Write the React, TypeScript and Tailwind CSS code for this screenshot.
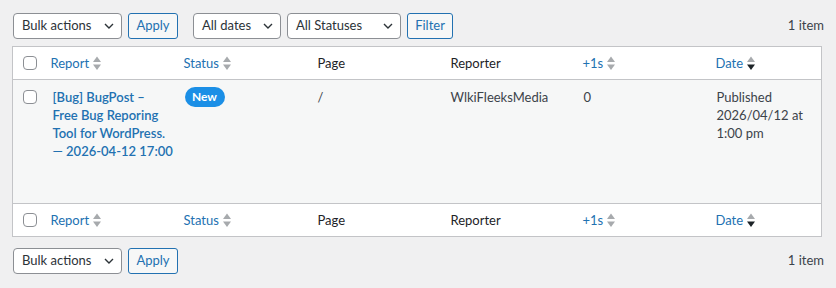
import React from 'react'

const font = { fontFamily: 'Lato, "Noto Sans", sans-serif' }

const Chevron = () => (
  <svg width="10" height="6" viewBox="0 0 10 6" className="shrink-0">
    <path d="M1 1l4 4 4-4" fill="none" stroke="#2c3338" strokeWidth="1.4" />
  </svg>
)

const SortIcon = ({ active = false }: { active?: boolean }) => (
  <svg width="8" height="15" viewBox="0 0 8 15" className="ml-1 inline-block shrink-0">
    <path d="M4 0.5L8 6H0z" fill="#a7aaad" />
    <path d="M0 8.5h8L4 14z" fill={active ? '#1d2327' : '#a7aaad'} />
  </svg>
)

const Select = ({ label, width }: { label: string; width: string }) => (
  <div
    className={`${width} h-[26px] flex items-center justify-between pl-[8px] pr-[7px] bg-white border border-[#8c8f94] rounded-[4px] text-[13px] text-[#2c3338]`}
  >
    <span>{label}</span>
    <Chevron />
  </div>
)

const Button = ({ label, width }: { label: string; width: string }) => (
  <div
    className={`${width} h-[26px] flex items-center justify-center bg-[#f6f7f7] border border-[#2271b1] rounded-[3px] text-[13px] text-[#2271b1]`}
  >
    {label}
  </div>
)

const Checkbox = () => (
  <div className="w-[14px] h-[14px] bg-white border border-[#8c8f94] rounded-[4px]" />
)

const HeaderRow = ({ top }: { top: boolean }) => (
  <tr className={`bg-white h-[33px] ${top ? 'border-b' : 'border-t'} border-[#c3c4c7]`}>
    <td className="pl-[10px] align-middle">
      <Checkbox />
    </td>
    <td className="pl-[10px] align-middle">
      <span className="inline-flex items-center text-[#2271b1]">
        Report
        <SortIcon />
      </span>
    </td>
    <td className="pl-[10px] align-middle">
      <span className="inline-flex items-center text-[#2271b1]">
        Status
        <SortIcon />
      </span>
    </td>
    <td className="pl-[10px] align-middle text-[#1d2327]">Page</td>
    <td className="pl-[10px] align-middle text-[#1d2327]">Reporter</td>
    <td className="pl-[10px] align-middle">
      <span className="inline-flex items-center text-[#2271b1]">
        +1s
        <SortIcon />
      </span>
    </td>
    <td className="pl-[10px] align-middle">
      <span className="inline-flex items-center text-[#2271b1]">
        Date
        <SortIcon active />
      </span>
    </td>
  </tr>
)

export default function App() {
  return (
    <div className="w-[836px] h-[288px] bg-[#f0f0f1] px-3 pt-[13px]" style={font}>
      {/* top tablenav */}
      <div className="flex items-center pl-px">
        <Select label="Bulk actions" width="w-[109px]" />
        <div className="ml-[6px]">
          <Button label="Apply" width="w-[50px]" />
        </div>
        <div className="ml-[15px]">
          <Select label="All dates" width="w-[88px]" />
        </div>
        <div className="ml-[6px]">
          <Select label="All Statuses" width="w-[114px]" />
        </div>
        <div className="ml-[6px]">
          <Button label="Filter" width="w-[46px]" />
        </div>
        <div className="ml-auto text-[13px] text-[#3c434a]">1 item</div>
      </div>

      {/* list table */}
      <table className="mt-[7px] w-[810px] table-fixed border border-[#c3c4c7] border-collapse text-[13px] leading-[18px]">
        <colgroup>
          <col className="w-[28px]" />
          <col className="w-[133px]" />
          <col className="w-[134px]" />
          <col className="w-[133px]" />
          <col className="w-[132px]" />
          <col className="w-[133px]" />
          <col />
        </colgroup>
        <thead>
          <HeaderRow top />
        </thead>
        <tbody>
          <tr className="bg-[#f6f7f7] h-[124px] align-top">
            <td className="pl-[10px] pt-[10px]">
              <Checkbox />
            </td>
            <td className="pl-[12px] pt-[8px] whitespace-nowrap">
              <span className="font-semibold text-[#2271b1]">
                [Bug] BugPost –<br />
                Free Bug Reporing
                <br />
                Tool for WordPress.
                <br />— 2026-04-12 17:00
              </span>
            </td>
            <td className="pl-[11px] pt-[7px]">
              <span className="inline-flex items-center justify-center w-[40px] h-[20px] rounded-full bg-[#1b8fe6] text-white text-[12px] font-bold">
                New
              </span>
            </td>
            <td className="pl-[10px] pt-[8px] text-[#3c434a]">/</td>
            <td className="pl-[10px] pt-[8px] text-[#3c434a]">WlkiFleeksMedia</td>
            <td className="pl-[11px] pt-[8px] text-[#3c434a]">0</td>
            <td className="pl-[11px] pt-[8px] pr-2 text-[#3c434a]">
              Published
              <br />
              2026/04/12 at
              <br />
              1:00 pm
            </td>
          </tr>
        </tbody>
        <tfoot>
          <HeaderRow top={false} />
        </tfoot>
      </table>

      {/* bottom tablenav */}
      <div className="flex items-center pl-px mt-[11px]">
        <Select label="Bulk actions" width="w-[109px]" />
        <div className="ml-[6px]">
          <Button label="Apply" width="w-[50px]" />
        </div>
        <div className="ml-auto text-[13px] text-[#3c434a]">1 item</div>
      </div>
    </div>
  )
}
